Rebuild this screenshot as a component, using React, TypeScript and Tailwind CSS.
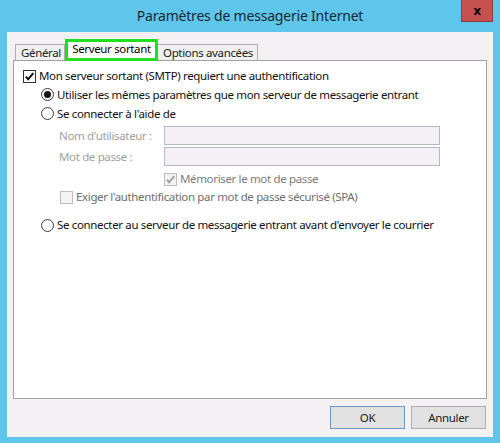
import React from "react";

function Box({ checked, disabled }: { checked?: boolean; disabled?: boolean }) {
  return (
    <div
      className={
        "w-[13px] h-[13px] shrink-0 border flex items-center justify-center " +
        (disabled ? "border-[#bcbcbc] bg-[#f4f4f4]" : "border-[#333333] bg-white")
      }
    >
      {checked && (
        <svg width="11" height="11" viewBox="0 0 11 11">
          <path
            d="M1.8 5.6 L4.2 8.2 L9.3 2.2"
            fill="none"
            stroke={disabled ? "#a3a3a3" : "#111111"}
            strokeWidth="2"
          />
        </svg>
      )}
    </div>
  );
}

function Radio({ checked }: { checked?: boolean }) {
  return (
    <div className="w-[13px] h-[13px] shrink-0 rounded-full border border-[#3a3a3a] bg-white flex items-center justify-center">
      {checked && <div className="w-[7px] h-[7px] rounded-full bg-[#151515]" />}
    </div>
  );
}

export default function App() {
  return (
    <div className="w-[500px] h-[443px] bg-[#5ec6ea] flex flex-col font-['Noto_Sans',sans-serif] text-[11.5px] tracking-[-0.35px] text-[#111] whitespace-nowrap">
      {/* Title bar */}
      <div className="h-[32px] shrink-0 grid grid-cols-[1fr_auto_1fr] px-[7px]">
        <div />
        <div className="flex items-center justify-center text-[14px] tracking-[-0.2px] text-[#1b2733] pb-[1px]">
          Paramètres de messagerie Internet
        </div>
        <div className="flex justify-end items-start">
          <div className="w-[32px] h-[22px] bg-[#c75050] border border-[#8c3a3a] border-t-0 flex items-center justify-center text-[13px] font-bold text-black leading-none">
            x
          </div>
        </div>
      </div>

      {/* Client area */}
      <div className="mx-[7px] h-[405px] bg-[#f4f1f4] px-[6px] pt-[7px] flex flex-col">
        {/* Tabs */}
        <div className="flex items-end h-[21px] pl-[2px]">
          <div className="h-[16px] w-[50px] border border-b-0 border-[#adadad] bg-[#f0f0f0] flex items-center pl-[5px] text-[#222]">
            Général
          </div>
          <div className="relative z-10 h-[22px] w-[93px] -mb-[1px] border-[3px] border-[#20e020] bg-white flex items-center justify-center pb-[3px] text-black">
            Serveur sortant
          </div>
          <div className="h-[16px] w-[100px] border border-b-0 border-l-0 border-[#adadad] bg-[#f0f0f0] flex items-center pl-[5px] text-[#222]">
            Options avancées
          </div>
        </div>

        {/* Panel */}
        <div className="h-[339px] border border-[#a2a2a2] bg-white flex flex-col pt-[6px]">
          <div className="h-[18px] flex items-center pl-[9px] gap-[3px]">
            <Box checked />
            <span>Mon serveur sortant (SMTP) requiert une authentification</span>
          </div>
          <div className="h-[19px] flex items-center pl-[27px] gap-[3px]">
            <Radio checked />
            <span>Utiliser les mêmes paramètres que mon serveur de messagerie entrant</span>
          </div>
          <div className="h-[19px] flex items-center pl-[27px] gap-[3px]">
            <Radio />
            <span>Se connecter à l'aide de</span>
          </div>
          <div className="h-[19px] mt-[3px] flex items-center pl-[45px]">
            <span className="w-[105px] text-[#a0a0a0]">Nom d'utilisateur :</span>
            <div className="w-[276px] h-[19px] border border-[#b3bac4] bg-[#f5f0f5]" />
          </div>
          <div className="h-[19px] mt-[2px] flex items-center pl-[45px]">
            <span className="w-[105px] text-[#a0a0a0]">Mot de passe :</span>
            <div className="w-[276px] h-[19px] border border-[#b3bac4] bg-[#f5f0f5]" />
          </div>
          <div className="h-[18px] mt-[4px] flex items-center pl-[150px] gap-[3px]">
            <Box checked disabled />
            <span className="text-[#7c7c7c]">Mémoriser le mot de passe</span>
          </div>
          <div className="h-[18px] flex items-center pl-[46px] gap-[3px]">
            <Box disabled />
            <span className="text-[#6e6e6e]">Exiger l'authentification par mot de passe sécurisé (SPA)</span>
          </div>
          <div className="h-[18px] mt-[10px] flex items-center pl-[27px] gap-[3px]">
            <Radio />
            <span>Se connecter au serveur de messagerie entrant avant d'envoyer le courrier</span>
          </div>
        </div>

        {/* Buttons */}
        <div className="mt-[7px] flex justify-end gap-[6px] pr-[1px]">
          <div className="w-[75px] h-[23px] border border-[#6f97c4] bg-[#e1e1e1] flex items-center justify-center text-[#222]">
            OK
          </div>
          <div className="w-[75px] h-[23px] border border-[#adadad] bg-[#e1e1e1] flex items-center justify-center text-[#222]">
            Annuler
          </div>
        </div>
      </div>
    </div>
  );
}
